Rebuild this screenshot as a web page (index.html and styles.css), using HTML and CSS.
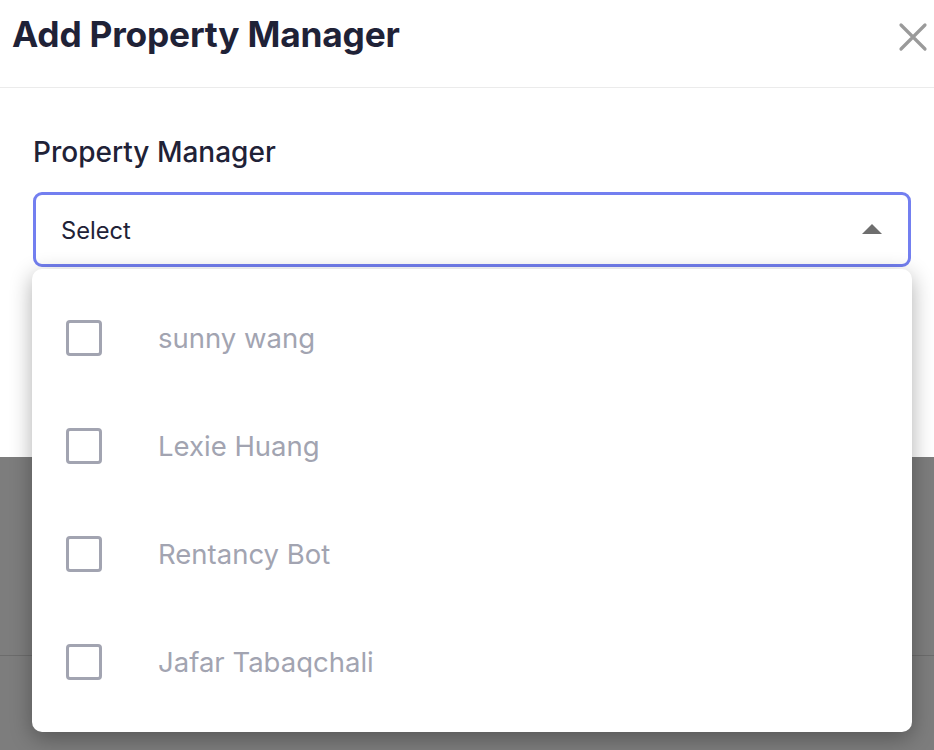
FILE: index.html
```html
<!DOCTYPE html>
<html>
<head>
<meta charset="utf-8">
<link rel="stylesheet" href="styles.css">
</head>
<body>
<div class="modal">
  <div class="modal-header">
    <h1 class="title">Add Property Manager</h1>
    <button class="close" aria-label="Close">
      <svg width="30" height="30" viewBox="0 0 30 30"><path d="M3 3 L27 27 M27 3 L3 27" stroke="#9a9a9a" stroke-width="3.2" stroke-linecap="round"/></svg>
    </button>
  </div>
  <div class="modal-body">
    <div class="label">Property Manager</div>
    <div class="select-wrap">
      <div class="select">
        <span class="select-text">Select</span>
        <span class="arrow"></span>
      </div>
      <ul class="dropdown">
        <li class="option"><span class="checkbox"></span><span class="opt-text">sunny wang</span></li>
        <li class="option"><span class="checkbox"></span><span class="opt-text">Lexie Huang</span></li>
        <li class="option"><span class="checkbox"></span><span class="opt-text">Rentancy Bot</span></li>
        <li class="option"><span class="checkbox"></span><span class="opt-text">Jafar Tabaqchali</span></li>
      </ul>
    </div>
  </div>
</div>
<div class="backdrop-line"></div>
</body>
</html>
```
FILE: styles.css
```css
html, body {
  margin: 0;
  padding: 0;
}
body {
  background: #7d7d7d;
  font-family: Inter, "Noto Sans", sans-serif;
  width: 934px;
  height: 750px;
  overflow: hidden;
}
.modal {
  background: #ffffff;
  height: 457px;
}
.modal-header {
  height: 88px;
  box-sizing: border-box;
  border-bottom: 1px solid #ebebeb;
  display: flex;
  align-items: flex-start;
  justify-content: space-between;
  padding: 14px 6px 0 12px;
}
.title {
  margin: 0;
  font-size: 35.3px;
  line-height: 42px;
  font-weight: 700;
  color: #1f2237;
  letter-spacing: -0.2px;
}
.close {
  background: none;
  border: 0;
  padding: 0;
  width: 30px;
  height: 30px;
  display: flex;
  margin-top: 8px;
}
.modal-body {
  padding: 47px 23px 0 33px;
}
.label {
  font-size: 28px;
  font-weight: 500;
  color: #1f2237;
  line-height: 34px;
}
.select-wrap {
  position: relative;
  margin-top: 23px;
}
.select {
  box-sizing: border-box;
  height: 75px;
  border: 3px solid #737ff0;
  border-radius: 9px;
  display: flex;
  align-items: center;
  justify-content: space-between;
  padding: 0 26px 0 25px;
}
.select-text {
  font-size: 23.7px;
  color: #1f2237;
  margin-top: 2px;
}
.arrow {
  width: 0;
  height: 0;
  border-left: 10px solid transparent;
  border-right: 10px solid transparent;
  border-bottom: 10px solid #6e6e6e;
  margin-bottom: 2px;
}
.dropdown {
  position: absolute;
  left: -1px;
  right: -1px;
  top: 77px;
  margin: 0;
  padding: 15px 0 16px;
  list-style: none;
  background: #ffffff;
  border-radius: 10px;
  box-shadow: 0 6px 22px rgba(0, 0, 0, 0.32);
  z-index: 2;
}
.option {
  height: 108px;
  display: flex;
  align-items: center;
  padding-left: 34px;
}
.checkbox {
  box-sizing: border-box;
  width: 36px;
  height: 36px;
  border: 3px solid #a2a4b1;
  border-radius: 4px;
  flex: none;
}
.opt-text {
  margin-left: 56px;
  font-size: 27.5px;
  color: #a2a4b1;
}
.backdrop-line {
  margin-top: 198px;
  border-top: 1px solid #6c6c6c;
}
```
